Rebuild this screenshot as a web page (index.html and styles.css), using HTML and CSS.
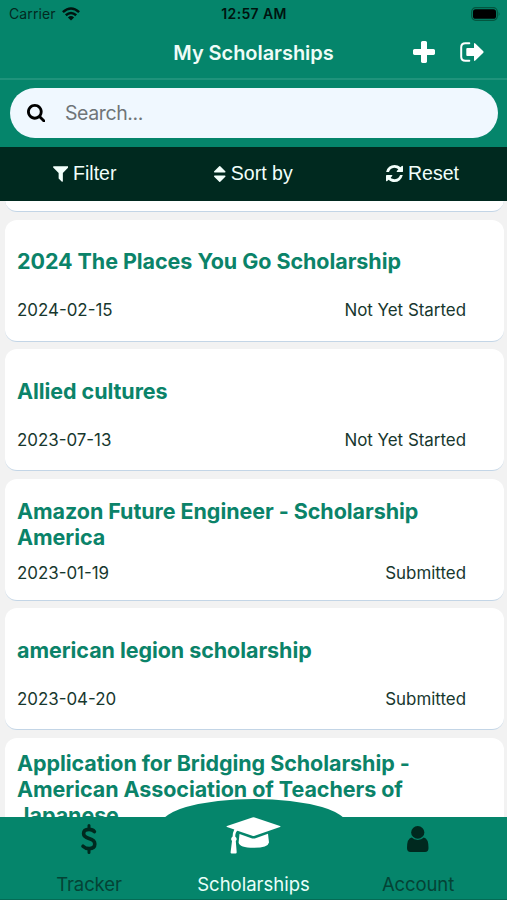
FILE: index.html
```html
<!DOCTYPE html>
<html lang="en">
<head>
<meta charset="utf-8">
<title>My Scholarships</title>
<link rel="stylesheet" href="styles.css">
</head>
<body>
<div class="app">
  <header class="header">
    <div class="status">
      <div class="carrier"><span class="carrier-name">Carrier</span>
        <svg class="wifi" viewBox="0 0 18 14"><g fill="none" stroke="currentColor" stroke-width="2.5"><path d="M.9 5.2Q9-2.3 17.1 5.2"/><path d="M3.8 8.3Q9 3.6 14.2 8.3"/></g><path d="M9 13.5 5.9 10.4Q9 7.8 12.1 10.4Z" fill="currentColor"/></svg>
      </div>
      <span class="time">12:57 AM</span>
      <svg class="battery" viewBox="0 0 30 14"><rect x=".7" y=".7" width="25.6" height="12.6" rx="4" fill="none" stroke="#03563f" stroke-width="1.2"/><rect x="2" y="2.2" width="23" height="9.6" rx="2.6"/><path d="M27.7 4.8Q29.5 7 27.7 9.2Z" fill="#03563f"/></svg>
    </div>
    <div class="nav">
      <h1 class="nav-title">My Scholarships</h1>
      <div class="nav-actions">
        <svg class="plus" viewBox="192 128 1408 1408"><path d="M1600 736v192q0 40-28 68t-68 28h-416v416q0 40-28 68t-68 28h-192q-40 0-68-28t-28-68v-416h-416q-40 0-68-28t-28-68v-192q0-40 28-68t68-28h416v-416q0-40 28-68t68-28h192q40 0 68 28t28 68v416h416q40 0 68 28t28 68z"/></svg>
        <svg class="exit" viewBox="0 0 24 20"><path d="M9.3 1.2H5.4Q1.2 1.2 1.2 5.2V14.8Q1.2 18.8 5.4 18.8H9.3" fill="none" stroke="currentColor" stroke-width="2" stroke-linecap="round"/><path d="M7.3 6H14V2Q14 .4 15.3 1.4L23.3 9.3Q24 10 23.3 10.7L15.3 18.6Q14 19.6 14 18V14H7.3Q6.3 14 6.3 13V7Q6.3 6 7.3 6Z"/></svg>
      </div>
    </div>
    <div class="search-wrap">
      <div class="search">
        <svg viewBox="64 128 1664 1664"><path d="M1216 832q0-185-131.500-316.500t-316.500-131.500-316.500 131.500-131.500 316.500 131.500 316.500 316.500 131.500 316.500-131.500 131.500-316.500zm512 832q0 52-38 90t-90 38q-54 0-90-38l-343-342q-179 124-399 124-143 0-273.500-55.500t-225-150-150-225-55.500-273.500 55.500-273.500 150-225 225-150 273.500-55.500 273.500 55.500 225 150 150 225 55.500 273.500q0 220-124 399l343 343q37 37 37 90z"/></svg>
        <span>Search...</span>
      </div>
    </div>
  </header>
  <div class="toolbar">
    <div class="tool"><svg class="filter" viewBox="192 256 1408 1408"><path d="M1595 295q17 41-14 70l-493 493v742q0 42-39 59-13 5-25 5-27 0-45-19l-256-256q-19-19-19-45v-486l-493-493q-31-29-14-70 17-39 59-39h1280q42 0 59 39z"/></svg><span>Filter</span></div>
    <div class="tool"><svg class="sort" viewBox="384 192 1024 1408"><path d="M1408 1088q0 26-19 45l-448 448q-19 19-45 19t-45-19l-448-448q-19-19-19-45t19-45 45-19h896q26 0 45 19t19 45zm0-384q0 26-19 45t-45 19h-896q-26 0-45-19t-19-45 19-45l448-448q19-19 45-19t45 19l448 448q19 19 19 45z"/></svg><span>Sort by</span></div>
    <div class="tool"><svg class="reset" viewBox="128 128 1536 1536"><path d="M1639 1056q0 5-1 7-64 268-268 434.500t-478 166.500q-146 0-282.500-55t-243.500-157l-129 129q-19 19-45 19t-45-19-19-45v-448q0-26 19-45t45-19h448q26 0 45 19t19 45-19 45l-137 137q71 66 161 102t187 36q134 0 250-65t186-179q11-17 53-117 8-23 30-23h192q13 0 22.500 9.500t9.500 22.500zm25-800v448q0 26-19 45t-45 19h-448q-26 0-45-19t-19-45 19-45l138-138q-148-137-349-137-134 0-250 65t-186 179q-11 17-53 117-8 23-30 23h-199q-13 0-22.500-9.500t-9.500-22.500v-7q65-268 270-434.500t480-166.500q146 0 284 55.500t245 156.500l130-129q19-19 45-19t45 19 19 45z"/></svg><span>Reset</span></div>
  </div>
  <main class="list">
    <article class="card card-end"></article>
    <article class="card"><h2>2024 The Places You Go Scholarship</h2><div class="meta"><span>2024-02-15</span><span>Not Yet Started</span></div></article>
    <article class="card"><h2>Allied cultures</h2><div class="meta"><span>2023-07-13</span><span>Not Yet Started</span></div></article>
    <article class="card two-line"><h2>Amazon Future Engineer - Scholarship<br>America</h2><div class="meta"><span>2023-01-19</span><span>Submitted</span></div></article>
    <article class="card"><h2>american legion scholarship</h2><div class="meta"><span>2023-04-20</span><span>Submitted</span></div></article>
    <article class="card three-line"><h2>Application for Bridging Scholarship -<br>American Association of Teachers of<br>Japanese</h2></article>
  </main>
  <nav class="tabs">
    <svg class="hump" viewBox="0 0 180 20"><path d="M0 20Q8 13 22 9Q52 1 90 1T158 9Q172 13 180 20Z"/></svg>
    <div class="tab"><div class="tab-icon"><svg class="dollar" viewBox="0 0 18 30"><g fill="none" stroke="currentColor" stroke-linecap="round"><path d="M14.400 7.600Q12.600 5.400 9 5.400Q3.600 5.400 3.600 9.600Q3.600 13 9 14.600Q14.800 16.200 14.800 20Q14.800 24.600 9.200 24.600Q5.400 24.600 3 22.200" stroke-width="3.600"/><path d="M9 1.600V5M9 25V28.400" stroke-width="3"/></g></svg></div><span>Tracker</span></div>
    <div class="tab active"><div class="tab-icon"><svg class="cap" viewBox="0 0 55 37"><path d="M1 9 26.300.4Q27.500.1 28.700.4L54 9Q55 9.500 54 10L28.700 18.800Q27.500 19.200 26.300 18.800L11.500 13.800Q9.400 15 9.200 19.500Q11.800 21.500 9.800 24L10.700 35.200Q10.700 36.400 9.600 36.400H5.600Q4.500 36.400 4.600 35.200L6 24Q4 21.500 6.600 19.500Q6.700 15.500 8.300 12.600L1 10Q0 9.500 1 9Z"/><path d="M13.500 17 26.200 21.400Q27.500 21.800 28.800 21.400L42 16.800L43 25.500Q42 30.800 27.700 30.800T12.600 25.500Z"/></svg></div><span>Scholarships</span></div>
    <div class="tab"><div class="tab-icon"><svg class="user" viewBox="0 0 21.500 26"><ellipse cx="10.750" cy="6.400" rx="6.600" ry="6.300"/><path d="M4.700 11.600Q7 14 10.750 14T16.800 11.600Q21.500 12.500 21.500 22Q21.500 26 18 26H3.500Q0 26 0 22Q0 12.500 4.700 11.600Z"/></svg></div><span>Account</span></div>
  </nav>
</div>
</body>
</html>
```
FILE: styles.css
```css
* { box-sizing: border-box; }
body { margin: 0; background: #f2f2f2; font-family: Inter, "Liberation Sans", sans-serif; }
svg { display: block; flex: none; fill: currentColor; }
h1, h2 { margin: 0; }

.app { width: 507px; height: 900px; display: flex; flex-direction: column; overflow: hidden; }

.header { height: 146.5px; flex: none; background: #05856b; }
.status { height: 27px; padding: 0 6px 0 9px; display: grid; grid-template-columns: 1fr auto 1fr; align-items: center; color: #00140f; }
.carrier { display: flex; align-items: center; gap: 6px; }
.carrier-name { font-size: 14px; letter-spacing: 0.1px; color: #03291f; }
.wifi { width: 18px; height: 14px; }
.time { font-size: 14px; font-weight: 600; letter-spacing: 0.35px; margin-right: 2px; }
.battery { width: 30px; height: 14px; justify-self: end; color: #000; }

.nav { height: 53px; display: grid; grid-template-columns: 1fr auto 1fr; align-items: center; border-bottom: 2px solid #1f937b; color: #fff; }
.nav-title { grid-column: 2; font-size: 20px; line-height: 26px; font-weight: 600; letter-spacing: -0.05px; color: #effcf8; }
.nav-actions { display: flex; align-items: center; justify-content: flex-end; gap: 25px; padding: 0 23px 2px 0; }
.plus { width: 22px; height: 22px; }
.exit { width: 24px; height: 20px; }

.search-wrap { padding: 7.5px 9px 0 9.5px; }
.search { height: 50.5px; border-radius: 26px; background: #f0f8ff; display: flex; align-items: center; gap: 20px; padding-left: 17px; font-size: 19.5px; letter-spacing: -0.4px; color: #6f7578; }
.search svg { width: 18.5px; height: 18.5px; color: #000; }

.toolbar { height: 54.5px; flex: none; display: grid; grid-template-columns: repeat(3, 1fr); background: #00291f; color: #f2fffb; font-family: "Liberation Sans", sans-serif; font-size: 19.5px; }
.tool { display: flex; align-items: center; justify-content: center; gap: 5px; }
.filter { width: 15.5px; height: 16px; }
.sort { width: 11.5px; height: 16px; }
.reset { width: 17px; height: 17px; }

.list { flex: 1; min-height: 0; overflow: hidden; padding: 0 3.5px 0 4.5px; display: flex; flex-direction: column; gap: 7.5px; }
.card { height: 122px; flex: none; background: #fff; border-radius: 12px; border-bottom: 1.5px solid #c3d5e6; padding: 28.5px 37.5px 0 12.5px; }
.card h2 { color: #0b8369; font-size: 21.5px; line-height: 26px; font-weight: 700; letter-spacing: -0.06px; white-space: nowrap; }
.card-end { margin-top: -111px; }
.meta { margin-top: 26px; display: flex; justify-content: space-between; font-size: 16.9px; line-height: 20px; color: #17372e; }
.two-line { padding-top: 19.5px; }
.two-line .meta { margin-top: 13px; }
.three-line { padding-top: 12.5px; }

.tabs { position: relative; height: 83px; flex: none; display: grid; grid-template-columns: repeat(3, 164.5px); justify-content: center; background: #05856b; color: #00291f; border-bottom: 1px solid #056b55; }
.hump { position: absolute; left: 164px; top: -19px; width: 180px; height: 20px; color: #05856b; }
.tab { position: relative; display: flex; flex-direction: column; align-items: center; font-size: 18.5px; line-height: 24px; }
.tab span { color: #044335; margin-top: 11px; letter-spacing: -0.1px; }
.tab-icon { height: 44px; display: flex; align-items: center; }
.tab.active { color: #fff; }
.tab.active span { color: #e9fff9; letter-spacing: 0; }
.dollar { width: 18px; height: 30px; }
.cap { width: 55px; height: 37px; margin-top: -7px; }
.user { width: 21.5px; height: 26px; }
```
